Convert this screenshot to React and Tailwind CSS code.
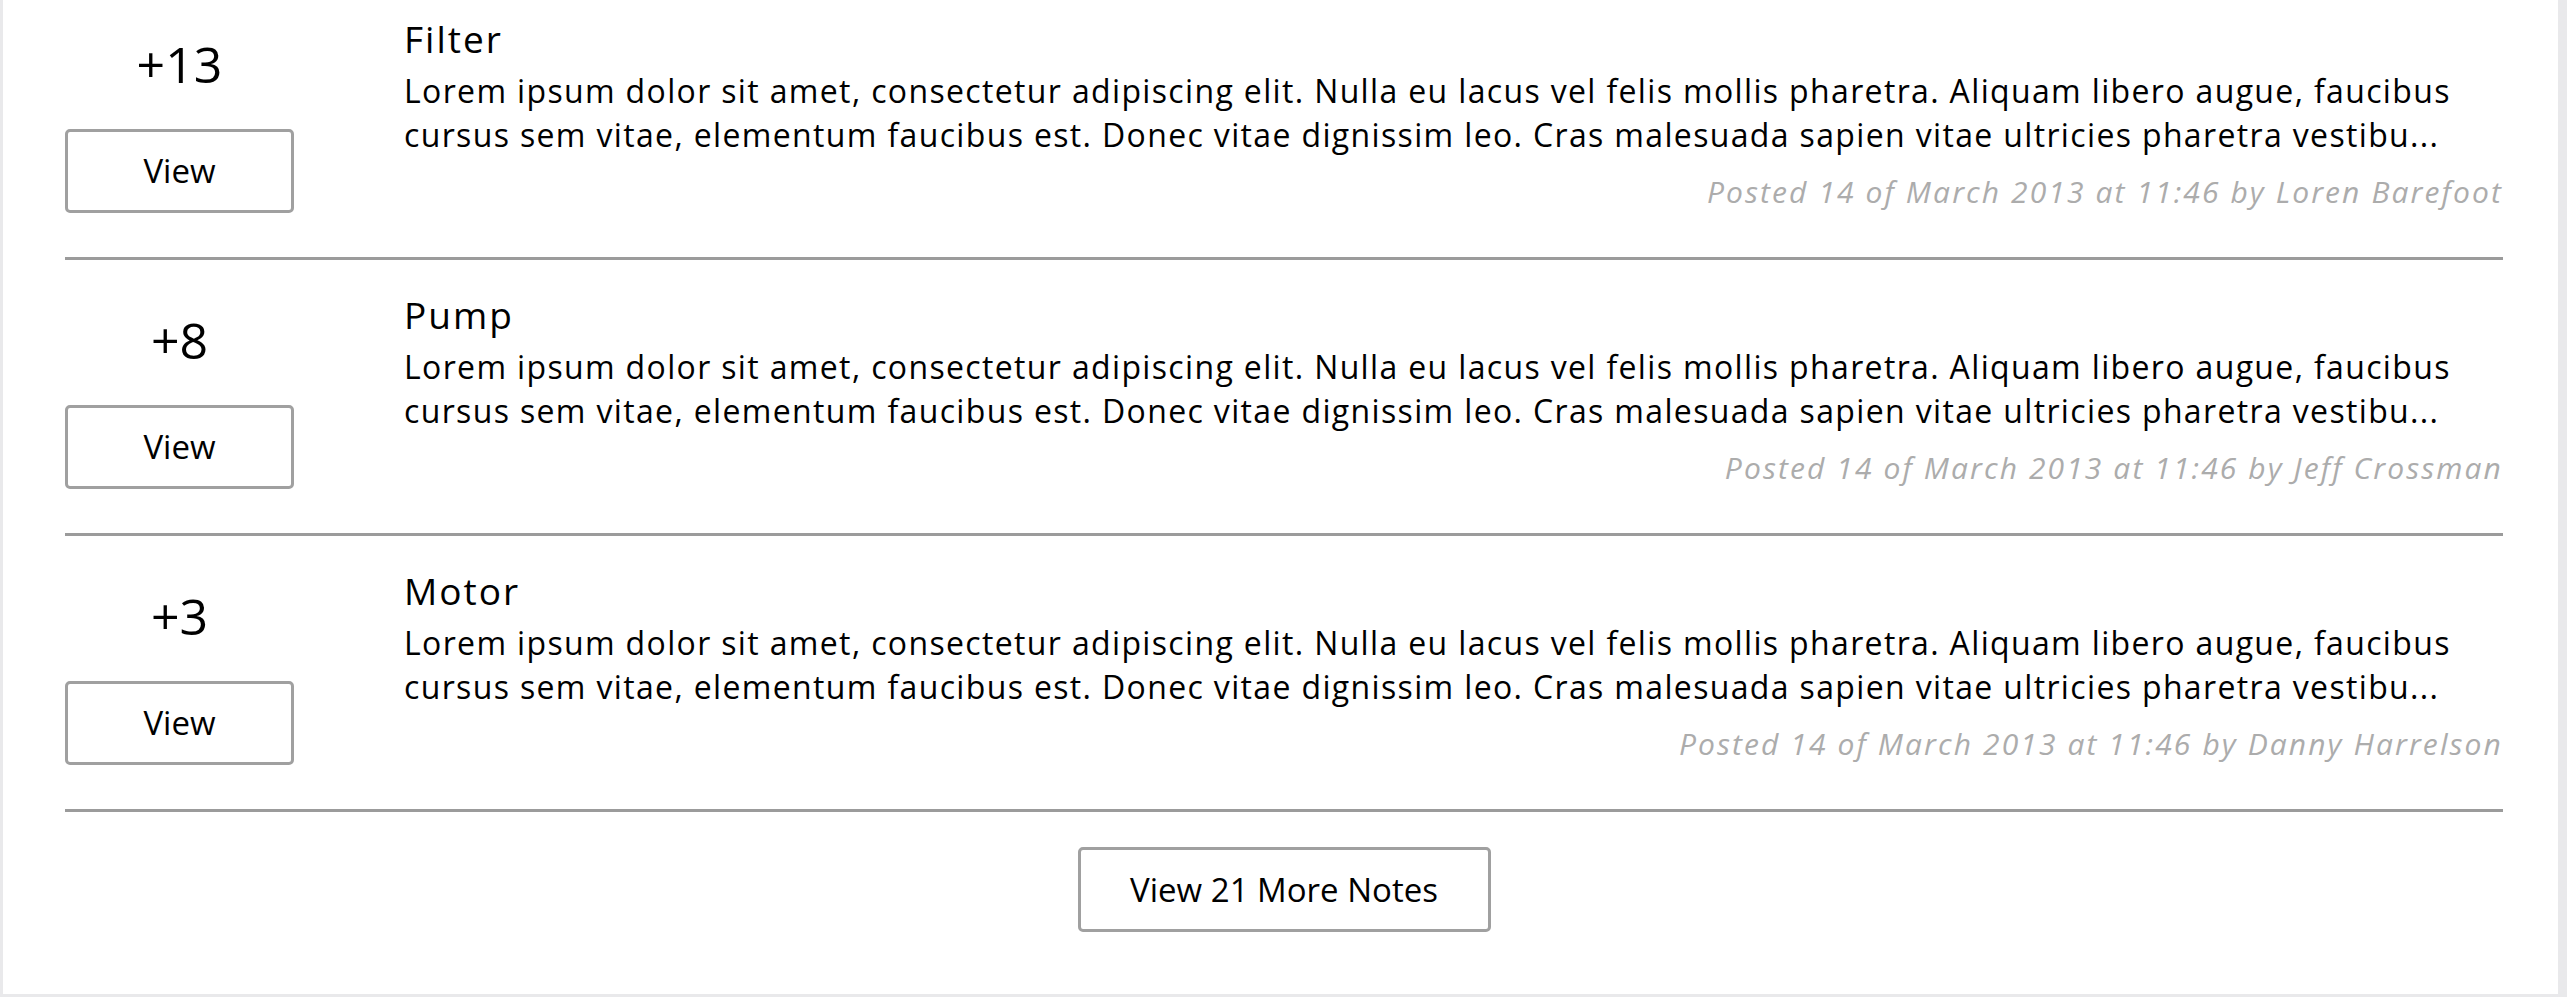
import React from "react";

const notes = [
  { score: "+13", title: "Filter", author: "Loren Barefoot" },
  { score: "+8", title: "Pump", author: "Jeff Crossman" },
  { score: "+3", title: "Motor", author: "Danny Harrelson" },
];

const line1 =
  "Lorem ipsum dolor sit amet, consectetur adipiscing elit. Nulla eu lacus vel felis mollis pharetra. Aliquam libero augue, faucibus";
const line2 =
  "cursus sem vitae, elementum faucibus est. Donec vitae dignissim leo. Cras malesuada sapien vitae ultricies pharetra vestibu...";

function Note({ note }) {
  return (
    <div className="flex h-[276px] border-b-[3px] border-[#9b9b9b]">
      <div className="w-[229px] shrink-0 flex flex-col items-center">
        <div className="mt-[55px] h-[50px] text-[50px] leading-[50px] text-black">
          {note.score}
        </div>
        <button className="mt-[40px] w-[229px] h-[84px] border-[3px] border-[#a0a0a0] rounded-[5px] bg-white flex items-center justify-center text-[33px] text-black">
          View
        </button>
      </div>
      <div className="flex-1 ml-[110px] flex flex-col">
        <div className="mt-[37px] h-[36px] text-[37px] leading-[36px] font-medium tracking-[2px] text-black">
          {note.title}
        </div>
        <div className="mt-[12px] text-[32px] leading-[44px] tracking-[1.35px] text-black whitespace-nowrap">
          <div>{line1}</div>
          <div>{line2}</div>
        </div>
        <div className="mt-[15px] text-right italic text-[30px] leading-[40px] tracking-[2.1px] text-[#acacac] whitespace-nowrap">
          Posted 14 of March 2013 at 11:46 by {note.author}
        </div>
      </div>
    </div>
  );
}

export default function App() {
  return (
    <div
      className="h-[997px] w-full overflow-hidden bg-[#e9e9eb] flex"
      style={{ fontFamily: '"Open Sans", "Liberation Sans", sans-serif' }}
    >
      <div className="flex-1 ml-[3px] mr-[9px] mb-[3px] bg-white overflow-hidden pl-[62px] pr-[55px]">
        <div className="-mt-[16px]">
          {notes.map((n) => (
            <Note key={n.title} note={n} />
          ))}
        </div>
        <div className="flex justify-center mt-[35px]">
          <button className="w-[413px] h-[85px] border-[3px] border-[#a0a0a0] rounded-[5px] bg-white flex items-center justify-center text-[33px] text-black">
            View 21 More Notes
          </button>
        </div>
      </div>
    </div>
  );
}
